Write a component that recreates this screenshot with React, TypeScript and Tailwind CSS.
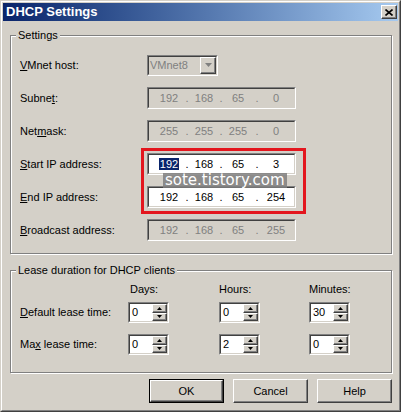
import type { ReactNode } from 'react';

const face = "font-['Liberation_Sans',Arial,sans-serif]";

// classic sunken 2px edge
const Sunken = ({ className, inner, children }: { className: string; inner: string; children?: ReactNode }) => (
  <div className={`border border-t-[#808080] border-l-[#808080] border-b-white border-r-white ${className}`}>
    <div className={`h-full border border-t-[#404040] border-l-[#404040] border-b-[#d4d0c8] border-r-[#d4d0c8] ${inner}`}>
      {children}
    </div>
  </div>
);

const Arrow = ({ up, fill = '#000' }: { up?: boolean; fill?: string }) => (
  <svg width="7" height="4" viewBox="0 0 7 4">
    <path d={up ? 'M3.5 0 L7 4 L0 4 Z' : 'M0 0 L7 0 L3.5 4 Z'} fill={fill} />
  </svg>
);

const IpField = ({ parts, disabled, pick }: { parts: string[]; disabled?: boolean; pick?: boolean }) => {
  const widths = ['w-[24px]', 'w-[22px]', 'w-[22px]', 'w-[22px]'];
  const dots = ['w-[12px]', 'w-[12px]', 'w-[16px]'];
  return (
    <Sunken
      className="w-[149px] h-[22px]"
      inner={`flex items-center pl-[8px] leading-[13px] ${disabled ? 'bg-[#d4d0c8] text-[#808080]' : 'bg-white text-black'}`}
    >
      {parts.map((p, i) => (
        <div key={i} className="flex">
          <span className={`${widths[i]} text-center`}>
            {pick && i === 0 ? <span className="bg-[#0a246a] text-white px-[1px]">{p}</span> : p}
          </span>
          {i < 3 && <span className={`${dots[i]} text-center`}>.</span>}
        </div>
      ))}
    </Sunken>
  );
};

const SpinBtn = ({ up }: { up?: boolean }) => (
  <div className="flex-1 flex items-center justify-center bg-[#d4d0c8] border border-t-white border-l-white border-b-[#404040] border-r-[#404040] shadow-[inset_-1px_-1px_0_#808080]">
    <svg width="5" height="3" viewBox="0 0 5 3">
      <path d={up ? 'M2.5 0 L5 3 L0 3 Z' : 'M0 0 L5 0 L2.5 3 Z'} fill="#000" />
    </svg>
  </div>
);

const Spin = ({ value }: { value: string }) => (
  <Sunken className="w-[41px] h-[21px]" inner="bg-white flex">
    <span className="flex-1 pl-[2px] leading-[17px]">{value}</span>
    <div className="w-[15px] flex flex-col">
      <SpinBtn up />
      <SpinBtn />
    </div>
  </Sunken>
);

const Button = ({ label, primary }: { label: string; primary?: boolean }) => (
  <div className={`w-[75px] h-[24px] ${primary ? 'border border-black' : ''}`}>
    <div className="h-full flex items-center justify-center bg-[#d4d0c8] border border-t-white border-l-white border-b-[#404040] border-r-[#404040] shadow-[inset_-1px_-1px_0_#808080]">
      {label}
    </div>
  </div>
);

const Group = ({ title, className, children }: { title: string; className: string; children: ReactNode }) => (
  <div className={`relative border border-[#808080] shadow-[inset_1px_1px_0_#fff,1px_1px_0_#fff] ${className}`}>
    <div className="-mt-[7px] ml-[5px] w-fit px-[2px] bg-[#d4d0c8] leading-[13px]">{title}</div>
    {children}
  </div>
);

const U = ({ children }: { children: ReactNode }) => <span className="underline underline-offset-[1px]">{children}</span>;

export default function App() {
  const rows: { label: ReactNode; field: ReactNode }[] = [
    {
      label: <><U>V</U>Mnet host:</>,
      field: (
        <Sunken className="w-[71px] h-[21px]" inner="bg-[#d4d0c8] flex items-center text-[#808080]">
          <span className="flex-1 pl-[1px] leading-[13px]">VMnet8</span>
          <div className="w-[16px] h-[17px] flex items-center justify-center border border-t-white border-l-white border-b-[#404040] border-r-[#404040] shadow-[inset_-1px_-1px_0_#808080]">
            <Arrow fill="#808080" />
          </div>
        </Sunken>
      ),
    },
    { label: <>Subne<U>t</U>:</>, field: <IpField parts={['192', '168', '65', '0']} disabled /> },
    { label: <>Net<U>m</U>ask:</>, field: <IpField parts={['255', '255', '255', '0']} disabled /> },
    { label: <><U>S</U>tart IP address:</>, field: <IpField parts={['192', '168', '65', '3']} pick /> },
    { label: <><U>E</U>nd IP address:</>, field: <IpField parts={['192', '168', '65', '254']} /> },
    { label: <><U>B</U>roadcast address:</>, field: <IpField parts={['192', '168', '65', '255']} disabled /> },
  ];

  return (
    <div className={`w-[401px] h-[412px] ${face} text-[11px] text-black`}>
      <div className="h-full border border-t-[#d4d0c8] border-l-[#d4d0c8] border-b-[#404040] border-r-[#404040]">
        <div className="h-full border border-t-white border-l-white border-b-[#808080] border-r-[#808080] bg-[#d4d0c8] p-[1px] flex flex-col">
          {/* Title bar */}
          <div className="h-[18px] flex items-center justify-between pl-[3px] pr-[1px] bg-gradient-to-r from-[#0a246a] to-[#a6caf0]">
            <span className="text-white font-bold text-[13px] leading-[16px]">DHCP Settings</span>
            <div className="w-[16px] h-[14px] flex items-center justify-center bg-[#d4d0c8] border border-t-white border-l-white border-b-[#404040] border-r-[#404040] shadow-[inset_-1px_-1px_0_#808080]">
              <svg width="8" height="7" viewBox="0 0 8 7">
                <path d="M0.5 0.5 L7.5 6.5 M7.5 0.5 L0.5 6.5" stroke="#000" strokeWidth="1.6" />
              </svg>
            </div>
          </div>

          <div className="pl-[7px] pr-[6px] flex flex-col">
            {/* Settings */}
            <Group title="Settings" className="mt-[14px] pb-[12px]">
              <div className="grid grid-cols-[127px_auto] gap-y-[11px] mt-[12px] pl-[9px]">
                {rows.map((r, i) => (
                  <div key={i} className="contents">
                    <div className="h-[22px] flex items-center leading-[13px]">{r.label}</div>
                    <div className="h-[22px] flex items-center">{r.field}</div>
                  </div>
                ))}
              </div>
              {/* annotation overlay */}
              <div className="absolute left-[130px] top-[112px] w-[165px] h-[66px] border-[3px] border-[#e3161e]" />
              <div className="absolute left-[152px] top-[137px] h-[15px] px-[2px] bg-[#7f7f7f]/85 text-white text-[15px] leading-[15px] font-['DejaVu_Sans',sans-serif]">
                sote.tistory.com
              </div>
            </Group>

            {/* Lease duration */}
            <Group title="Lease duration for DHCP clients" className="mt-[16px] pb-[17px]">
              <div className="grid grid-cols-[108px_91px_90px_41px] pl-[9px] mt-[6px] leading-[13px]">
                <div />
                <div className="pl-[2px]">Days:</div>
                <div>Hours:</div>
                <div>Minutes:</div>
              </div>
              <div className="grid grid-cols-[108px_91px_90px_41px] gap-y-[11px] pl-[9px] mt-[6px] items-center leading-[13px]">
                <div><U>D</U>efault lease time:</div>
                <Spin value="0" />
                <Spin value="0" />
                <Spin value="30" />
                <div>Ma<U>x</U> lease time:</div>
                <Spin value="0" />
                <Spin value="2" />
                <Spin value="0" />
              </div>
            </Group>

            <div className="mt-[6px] flex justify-end gap-[9px]">
              <Button label="OK" primary />
              <Button label="Cancel" />
              <Button label="Help" />
            </div>
          </div>
        </div>
      </div>
    </div>
  );
}
